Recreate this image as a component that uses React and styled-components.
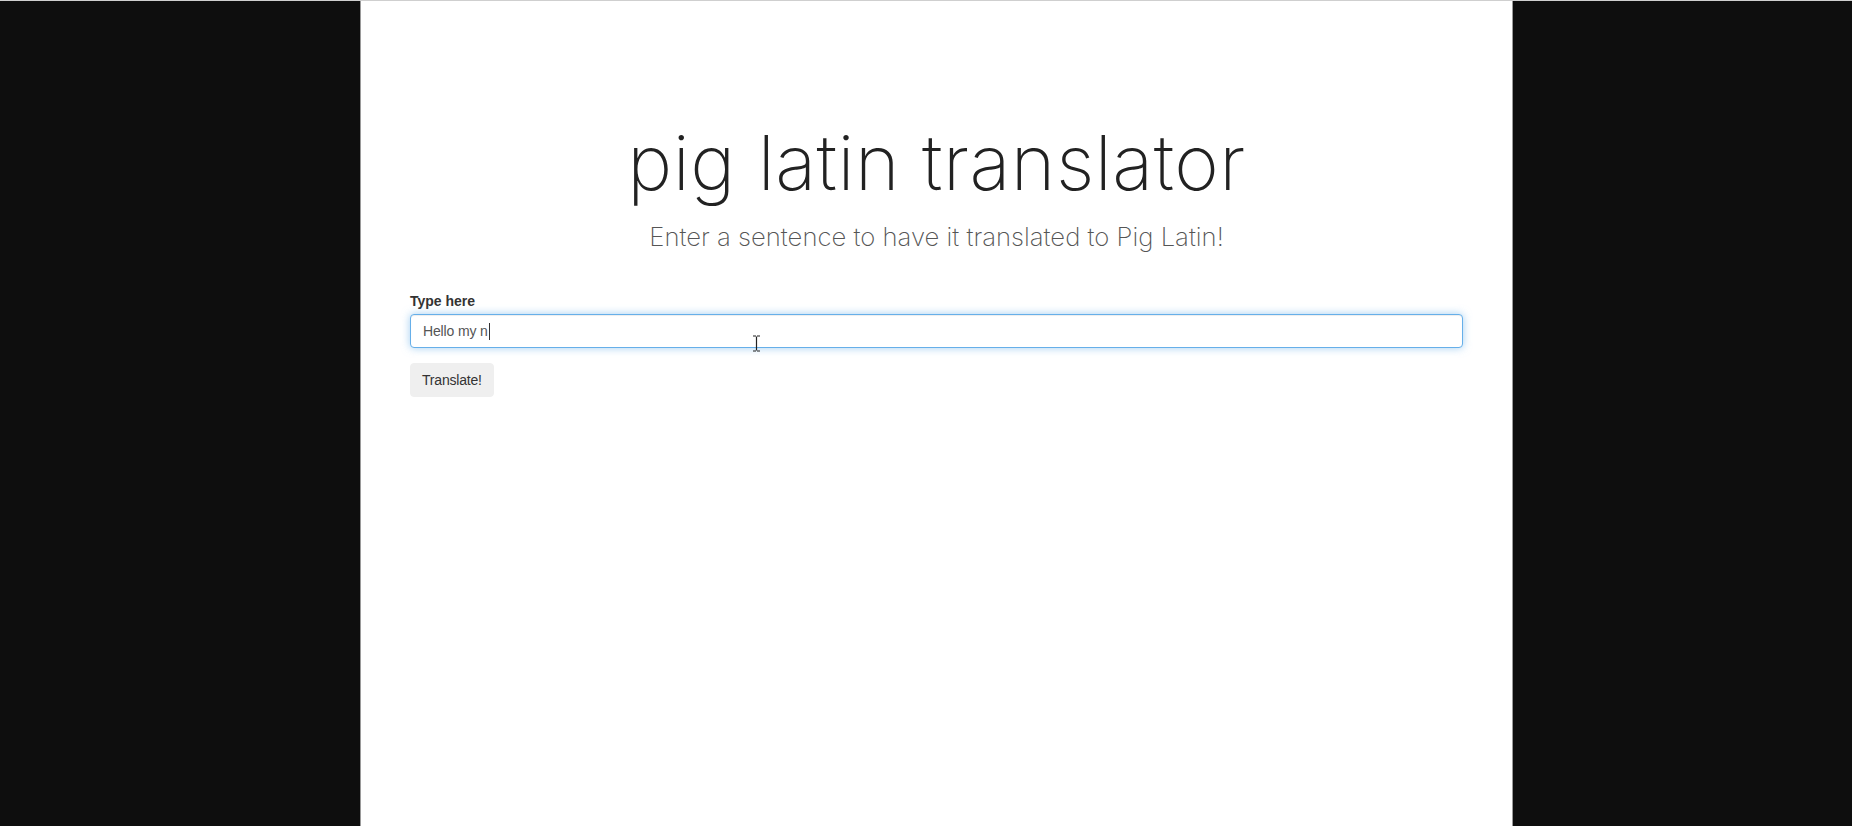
import React from "react";
import styled, { createGlobalStyle } from "styled-components";

const Global = createGlobalStyle`
  html, body { margin: 0; padding: 0; height: 100%; }
  body {
    background: #0e0e0e;
    border-top: 1px solid #cfcfcf;
    box-sizing: border-box;
    font-family: "Liberation Sans", Arial, sans-serif;
    font-size: 14px;
    color: #333;
  }
  #root { height: 100%; }
`;

const Page = styled.div`
  display: flex;
  height: 100%;
`;

const Panel = styled.main`
  flex: 0 0 1153px;
  margin-left: 360px;
  box-sizing: border-box;
  background: #fff;
  border-left: 1px solid #9a9a9a;
  border-right: 1px solid #9a9a9a;
  padding: 116px 49px 0;
  min-height: 825px;
`;

const Header = styled.header`
  text-align: center;
  margin-bottom: 41px;
`;

const Title = styled.h1`
  margin: 0;
  font-family: Inter, "Lato", sans-serif;
  font-weight: 200;
  font-size: 76px;
  line-height: 1.2;
  color: #222;
  letter-spacing: 0.5px;
`;

const Subtitle = styled.p`
  margin: 13px 0 0;
  font-family: Inter, "Lato", sans-serif;
  font-weight: 200;
  font-size: 25.7px;
  color: #555;
`;

const FormGroup = styled.div`
  margin-bottom: 15px;
`;

const Label = styled.label`
  display: block;
  font-weight: bold;
  font-size: 14px;
  margin-bottom: 5px;
  color: #333;
`;

const FieldWrap = styled.div`
  position: relative;
`;

const Field = styled.div`
  box-sizing: border-box;
  height: 34px;
  padding: 6px 12px;
  font-size: 14px;
  line-height: 20px;
  letter-spacing: -0.15px;
  color: #555;
  background: #fff;
  border: 1px solid #66afe9;
  border-radius: 4px;
  box-shadow: inset 0 1px 1px rgba(0, 0, 0, 0.075), 0 0 8px rgba(102, 175, 233, 0.6);
  display: flex;
  align-items: center;
`;

const Caret = styled.span`
  display: inline-block;
  width: 1px;
  height: 17px;
  background: #333;
  margin-left: 1px;
`;

const Pointer = styled.svg`
  position: absolute;
  left: 342px;
  top: 21px;
`;

const Button = styled.button`
  font-family: "Liberation Sans", Arial, sans-serif;
  font-size: 14px;
  line-height: 20px;
  letter-spacing: -0.2px;
  padding: 6px 11px;
  color: #333;
  background: #efefef;
  border: 1px solid #efefef;
  border-radius: 4px;
  cursor: pointer;
`;

export default function App() {
  return (
    <>
      <Global />
      <Page>
        <Panel>
          <Header>
            <Title>pig latin translator</Title>
            <Subtitle>Enter a sentence to have it translated to Pig Latin!</Subtitle>
          </Header>
          <FormGroup>
            <Label>Type here</Label>
            <FieldWrap>
              <Field>
                Hello my n<Caret />
              </Field>
              <Pointer width="9" height="17" viewBox="0 0 9 17">
                <path d="M1 1h3M5 1h3M4.5 1.5v14M1 16h3M5 16h3" stroke="#222" strokeWidth="1.2" fill="none" />
              </Pointer>
            </FieldWrap>
          </FormGroup>
          <Button>Translate!</Button>
        </Panel>
      </Page>
    </>
  );
}
